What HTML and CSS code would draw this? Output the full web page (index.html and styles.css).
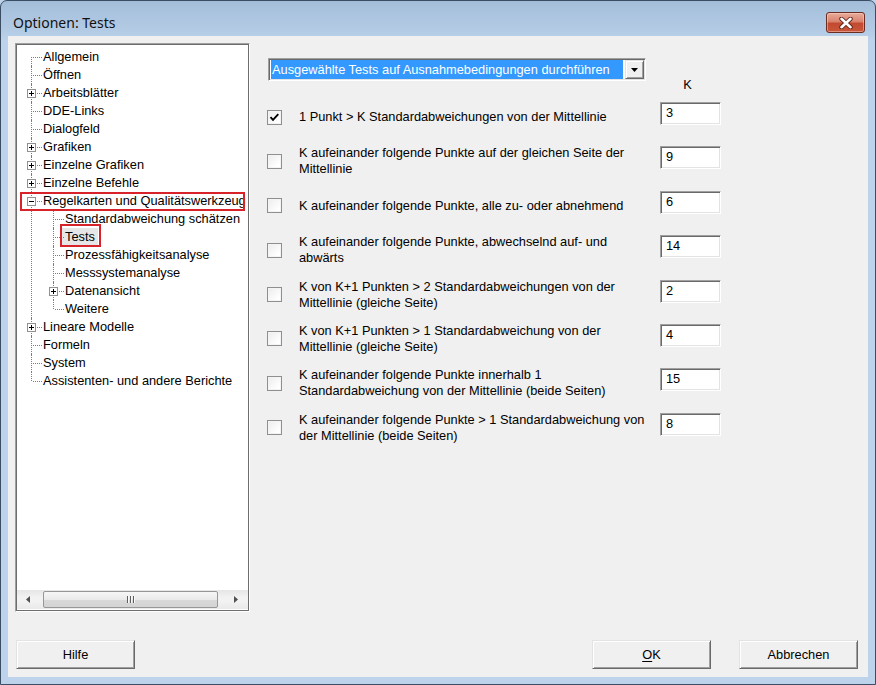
FILE: index.html
```html
<!DOCTYPE html>
<html lang="de">
<head>
<meta charset="utf-8">
<title>Optionen: Tests</title>
<link rel="stylesheet" href="styles.css">
</head>
<body>
<div class="window">
  <div class="titlebar">
    <div class="title">Optionen: Tests</div>
    <div class="close-btn">
      <svg width="16" height="12" viewBox="0 0 16 12">
        <path d="M3.5 1.8 L12.5 10.2 M12.5 1.8 L3.5 10.2" stroke="#5b2219" stroke-width="4.4" stroke-linecap="round"/>
        <path d="M3.5 1.8 L12.5 10.2 M12.5 1.8 L3.5 10.2" stroke="#ffffff" stroke-width="2.6" stroke-linecap="round"/>
      </svg>
    </div>
  </div>
  <div class="client">
    <div class="main">
      <div class="tree-box">
        <ul class="tree">
          <li><div class="lbl">Allgemein</div></li>
          <li><div class="lbl">Öffnen</div></li>
          <li><div class="lbl"><span class="exp"><svg width="9" height="9" viewBox="0 0 9 9"><rect x="0.5" y="0.5" width="8" height="8" fill="#fff" stroke="#919191"/><path d="M2 4.5H7M4.5 2V7" stroke="#000"/></svg></span>Arbeitsblätter</div></li>
          <li><div class="lbl">DDE-Links</div></li>
          <li><div class="lbl">Dialogfeld</div></li>
          <li><div class="lbl"><span class="exp"><svg width="9" height="9" viewBox="0 0 9 9"><rect x="0.5" y="0.5" width="8" height="8" fill="#fff" stroke="#919191"/><path d="M2 4.5H7M4.5 2V7" stroke="#000"/></svg></span>Grafiken</div></li>
          <li><div class="lbl"><span class="exp"><svg width="9" height="9" viewBox="0 0 9 9"><rect x="0.5" y="0.5" width="8" height="8" fill="#fff" stroke="#919191"/><path d="M2 4.5H7M4.5 2V7" stroke="#000"/></svg></span>Einzelne Grafiken</div></li>
          <li><div class="lbl"><span class="exp"><svg width="9" height="9" viewBox="0 0 9 9"><rect x="0.5" y="0.5" width="8" height="8" fill="#fff" stroke="#919191"/><path d="M2 4.5H7M4.5 2V7" stroke="#000"/></svg></span>Einzelne Befehle</div></li>
          <li>
            <div class="lbl"><span class="exp"><svg width="9" height="9" viewBox="0 0 9 9"><rect x="0.5" y="0.5" width="8" height="8" fill="#fff" stroke="#919191"/><path d="M2 4.5H7" stroke="#000"/></svg></span>Regelkarten und Qualitätswerkzeug<span class="mark mark-wide"></span></div>
            <ul>
              <li><div class="lbl">Standardabweichung schätzen</div></li>
              <li><div class="lbl"><span class="sel">Tests</span><span class="mark mark-tests"></span></div></li>
              <li><div class="lbl">Prozessfähigkeitsanalyse</div></li>
              <li><div class="lbl">Messsystemanalyse</div></li>
              <li><div class="lbl"><span class="exp"><svg width="9" height="9" viewBox="0 0 9 9"><rect x="0.5" y="0.5" width="8" height="8" fill="#fff" stroke="#919191"/><path d="M2 4.5H7M4.5 2V7" stroke="#000"/></svg></span>Datenansicht</div></li>
              <li><div class="lbl">Weitere</div></li>
            </ul>
          </li>
          <li><div class="lbl"><span class="exp"><svg width="9" height="9" viewBox="0 0 9 9"><rect x="0.5" y="0.5" width="8" height="8" fill="#fff" stroke="#919191"/><path d="M2 4.5H7M4.5 2V7" stroke="#000"/></svg></span>Lineare Modelle</div></li>
          <li><div class="lbl">Formeln</div></li>
          <li><div class="lbl">System</div></li>
          <li><div class="lbl">Assistenten- und andere Berichte</div></li>
        </ul>
        <div class="hscroll">
          <div class="sb-arrow sb-left"><svg width="4" height="7" viewBox="0 0 4 7"><path d="M4 0V7L0 3.5Z" fill="#505050"/></svg></div>
          <div class="sb-thumb"><span class="grip"></span><span class="grip"></span><span class="grip"></span></div>
          <div class="sb-gap"></div>
          <div class="sb-arrow sb-right"><svg width="4" height="7" viewBox="0 0 4 7"><path d="M0 0V7L4 3.5Z" fill="#505050"/></svg></div>
        </div>
      </div>
      <div class="panel">
        <div class="panel-head">
          <div class="combo">
            <div class="combo-field">Ausgewählte Tests auf Ausnahmebedingungen durchführen</div>
            <div class="combo-btn"><svg width="7" height="4" viewBox="0 0 7 4"><path d="M0 0H7L3.5 4Z" fill="#000"/></svg></div>
          </div>
          <div class="k-label">K</div>
        </div>
        <div class="tests">
          <div class="test-row">
            <div class="chk-label"><span class="chk"><svg width="13" height="13" viewBox="0 0 13 13"><path d="M2.5 6.2 L5 8.8 L10.3 3.2" fill="none" stroke="#000" stroke-width="1.9"/></svg></span><span class="chk-text">1 Punkt &gt; K Standardabweichungen von der Mittellinie</span></div>
            <div class="num">3</div>
          </div>
          <div class="test-row">
            <div class="chk-label"><span class="chk"></span><span class="chk-text">K aufeinander folgende Punkte auf der gleichen Seite der<br>Mittellinie</span></div>
            <div class="num">9</div>
          </div>
          <div class="test-row">
            <div class="chk-label"><span class="chk"></span><span class="chk-text">K aufeinander folgende Punkte, alle zu- oder abnehmend</span></div>
            <div class="num">6</div>
          </div>
          <div class="test-row">
            <div class="chk-label"><span class="chk"></span><span class="chk-text">K aufeinander folgende Punkte, abwechselnd auf- und<br>abwärts</span></div>
            <div class="num">14</div>
          </div>
          <div class="test-row">
            <div class="chk-label"><span class="chk"></span><span class="chk-text">K von K+1 Punkten &gt; 2 Standardabweichungen von der<br>Mittellinie (gleiche Seite)</span></div>
            <div class="num">2</div>
          </div>
          <div class="test-row">
            <div class="chk-label"><span class="chk"></span><span class="chk-text">K von K+1 Punkten &gt; 1 Standardabweichung von der<br>Mittellinie (gleiche Seite)</span></div>
            <div class="num">4</div>
          </div>
          <div class="test-row">
            <div class="chk-label"><span class="chk"></span><span class="chk-text">K aufeinander folgende Punkte innerhalb 1<br>Standardabweichung von der Mittellinie (beide Seiten)</span></div>
            <div class="num">15</div>
          </div>
          <div class="test-row">
            <div class="chk-label"><span class="chk"></span><span class="chk-text">K aufeinander folgende Punkte &gt; 1 Standardabweichung von<br>der Mittellinie (beide Seiten)</span></div>
            <div class="num">8</div>
          </div>
        </div>
      </div>
    </div>
    <div class="buttons">
      <div class="btn btn-help">Hilfe</div>
      <div class="btn btn-ok"><span class="mn">O</span>K</div>
      <div class="btn btn-cancel">Abbrechen</div>
    </div>
  </div>
</div>
</body>
</html>
```

FILE: styles.css
```css
html, body {
  margin: 0;
  padding: 0;
}

body {
  width: 876px;
  height: 685px;
  background: #bcd3eb;
  font-family: "Liberation Sans", Arial, sans-serif;
  font-size: 12.8px;
  color: #000;
  overflow: hidden;
}

.window {
  box-sizing: border-box;
  width: 876px;
  height: 685px;
  border: 1px solid #3a4d63;
  border-radius: 7px 7px 0 0;
  background: linear-gradient(to bottom, #a3bdd9 0px, #b4cbe5 30px, #bcd3eb 40px, #bcd3eb 100%);
  display: flex;
  flex-direction: column;
}

.titlebar {
  height: 35px;
  display: flex;
  justify-content: space-between;
  align-items: flex-start;
  flex: none;
}

.title {
  font-family: "Noto Sans", "Liberation Sans", sans-serif;
  font-size: 14px;
  line-height: 20px;
  margin: 12px 0 0 12px;
  color: #111;
}

.close-btn {
  box-sizing: border-box;
  width: 39px;
  height: 21px;
  margin: 11px 10px 0 0;
  border: 1px solid #6b2c22;
  border-radius: 3px;
  background: linear-gradient(to bottom, #e9ab9a 0%, #d9836e 45%, #c24a30 55%, #c9563a 100%);
  box-shadow: inset 0 0 0 1px rgba(255, 220, 210, 0.45);
  display: flex;
  align-items: center;
  justify-content: center;
}

.client {
  box-sizing: border-box;
  width: 860px;
  height: 641px;
  margin: 0 7px;
  background: #f0f0f0;
  padding: 7px 10px 8px 7px;
  display: flex;
  flex-direction: column;
  flex: none;
}

.main {
  display: flex;
  height: 569px;
  flex: none;
}

/* ---------- Tree ---------- */
.tree-box {
  box-sizing: border-box;
  width: 235px;
  height: 569px;
  border: 1px solid;
  border-color: #a0a0a0 #ffffff #ffffff #a0a0a0;
  box-shadow: inset 0 0 0 1px #6d6d6d;
  background: #fff;
  padding: 1px;
  display: flex;
  flex-direction: column;
  flex: none;
}

.tree {
  list-style: none;
  margin: 0;
  padding: 3px 0 0;
  flex: 1;
  overflow: hidden;
  background: #fff;
}

.tree ul {
  list-style: none;
  margin: 0;
  padding: 0;
}

.tree li {
  position: relative;
}

.tree li::before {
  content: "";
  position: absolute;
  top: 0;
  bottom: 0;
  left: 14px;
  border-left: 1px dotted #7c7c7c;
}

.tree ul li::before {
  left: 36px;
}

.tree > li:first-child::before {
  top: 9px;
}

.tree li:last-child::before {
  bottom: auto;
  height: 9px;
}

.lbl {
  position: relative;
  height: 18px;
  line-height: 18px;
  padding-left: 26px;
  white-space: nowrap;
}

.tree ul .lbl {
  padding-left: 48px;
}

.lbl::before {
  content: "";
  position: absolute;
  top: 9px;
  left: 16px;
  width: 9px;
  border-top: 1px dotted #7c7c7c;
}

.tree ul .lbl::before {
  left: 38px;
}

.exp {
  position: absolute;
  left: 10px;
  top: 5px;
  width: 9px;
  height: 9px;
  line-height: 0;
  z-index: 1;
}

.tree ul .exp {
  left: 32px;
}

.sel {
  display: inline-block;
  background: #e6e6e6;
  padding: 0 3px;
  margin-left: -3px;
  line-height: 18px;
}

.mark {
  position: absolute;
  box-sizing: border-box;
  border: 2px solid #d8232b;
  pointer-events: none;
  z-index: 2;
}

.mark-wide {
  left: 3px;
  top: 0;
  width: 225px;
  height: 19px;
}

.mark-tests {
  left: 43px;
  top: -4px;
  width: 41px;
  height: 23px;
}

/* ---------- Scrollbar ---------- */
.hscroll {
  height: 19px;
  margin-bottom: 1px;
  display: flex;
  align-items: stretch;
  background: linear-gradient(to bottom, #e6e6e6, #f2f2f2 40%, #f2f2f2 60%, #e9e9e9);
  flex: none;
}

.sb-arrow {
  display: flex;
  align-items: center;
}

.sb-left {
  width: 26px;
  padding-left: 9px;
  box-sizing: border-box;
}

.sb-right {
  width: 23px;
  padding-left: 9px;
  box-sizing: border-box;
}

.sb-thumb {
  box-sizing: border-box;
  width: 175px;
  margin: 1px 0;
  border: 1px solid #979797;
  border-radius: 2px;
  background: linear-gradient(to bottom, #f6f6f6 0%, #eaeaea 50%, #d9d9d9 51%, #d4d4d4 100%);
  display: flex;
  justify-content: center;
  align-items: center;
  gap: 2px;
}

.grip {
  width: 1px;
  height: 7px;
  background: #5e5e5e;
  box-shadow: 1px 0 0 #fafafa;
}

.sb-gap {
  flex: 1;
}

/* ---------- Right panel ---------- */
.panel {
  margin-left: 17px;
  padding-top: 15px;
  flex: 1;
}

.panel-head {
  display: flex;
  align-items: flex-start;
}

.combo {
  box-sizing: border-box;
  width: 378px;
  height: 23px;
  margin-left: 1px;
  border: 1px solid;
  border-color: #a0a0a0 #ffffff #ffffff #a0a0a0;
  box-shadow: inset 1px 1px 0 #696969, inset -1px -1px 0 #e3e3e3;
  background: #fff;
  padding: 1px 1px 1px 2px;
  display: flex;
  gap: 2px;
}

.combo-field {
  flex: 1;
  background: #3399ff;
  color: #fff;
  line-height: 19px;
  padding-left: 1px;
  white-space: nowrap;
  overflow: hidden;
}

.combo-btn {
  box-sizing: border-box;
  width: 19px;
  height: 19px;
  background: #f0f0f0;
  border: 1px solid;
  border-color: #e3e3e3 #696969 #696969 #e3e3e3;
  box-shadow: inset 1px 1px 0 #ffffff, inset -1px -1px 0 #a0a0a0;
  display: flex;
  align-items: center;
  justify-content: center;
}

.k-label {
  width: 61px;
  box-sizing: border-box;
  margin-left: 14px;
  margin-top: 19px;
  padding-right: 6px;
  text-align: center;
  line-height: 16px;
}

.tests {
  margin-top: 9px;
}

.test-row {
  height: 44.4px;
  display: flex;
  align-items: flex-start;
}

.chk-label {
  width: 393px;
  height: 30px;
  display: flex;
  align-items: center;
  flex: none;
}

.chk {
  box-sizing: border-box;
  width: 15px;
  height: 15px;
  border: 1px solid #8e8f8f;
  background: linear-gradient(135deg, #ececec 0%, #ffffff 80%);
  box-shadow: inset 0 0 0 1px #f4f4f4;
  flex: none;
  display: flex;
  align-items: center;
  justify-content: center;
}

.chk-text {
  margin-left: 17px;
  line-height: 16px;
  white-space: nowrap;
}

.num {
  box-sizing: border-box;
  width: 61px;
  height: 23px;
  border: 1px solid;
  border-color: #a0a0a0 #ffffff #ffffff #a0a0a0;
  box-shadow: inset 1px 1px 0 #696969, inset -1px -1px 0 #e3e3e3;
  background: #fff;
  padding-left: 5px;
  line-height: 19px;
  flex: none;
}

/* ---------- Buttons ---------- */
.buttons {
  margin-top: 28px;
  height: 29px;
  display: flex;
  padding-left: 1px;
}

.btn {
  box-sizing: border-box;
  width: 119px;
  height: 29px;
  background: #f0f0f0;
  border: 1px solid;
  border-color: #e3e3e3 #696969 #696969 #e3e3e3;
  box-shadow: inset 1px 1px 0 #ffffff, inset -1px -1px 0 #a0a0a0;
  text-align: center;
  line-height: 28px;
}

.btn-ok {
  margin-left: auto;
}

.btn-cancel {
  margin-left: 28px;
}

.mn {
  text-decoration: underline;
  text-underline-offset: 2px;
}
```
